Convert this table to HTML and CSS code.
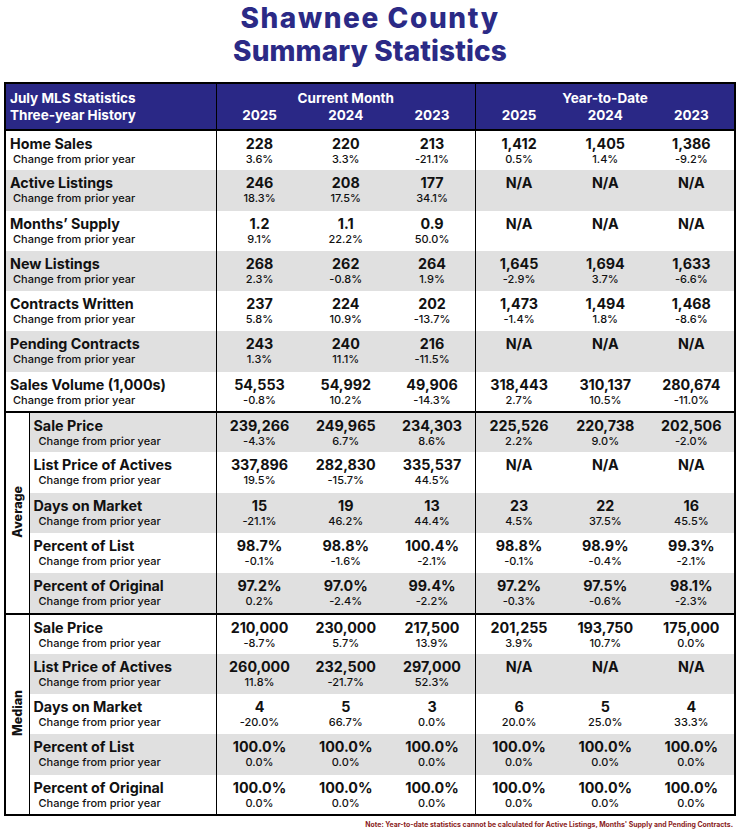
FILE: index.html
```html
<!DOCTYPE html>
<html lang="en">
<head>
<meta charset="utf-8">
<title>Shawnee County Summary Statistics</title>
<link rel="stylesheet" href="styles.css">
</head>
<body>
<header class="title">
  <h1>Shawnee County</h1>
  <h2>Summary Statistics</h2>
</header>
<table class="stats">
  <colgroup>
    <col class="c-side"><col class="c-label">
    <col class="c-num"><col class="c-num"><col class="c-num">
    <col class="c-num"><col class="c-num"><col class="c-num">
  </colgroup>
  <thead>
    <tr class="h1">
      <th colspan="2" rowspan="2" class="h-label"><div>July MLS Statistics</div><div>Three-year History</div></th>
      <th colspan="3" class="h-group div">Current Month</th>
      <th colspan="3" class="h-group div">Year-to-Date</th>
    </tr>
    <tr class="h2">
      <th class="div">2025</th><th>2024</th><th>2023</th>
      <th class="div">2025</th><th>2024</th><th>2023</th>
    </tr>
  </thead>
  <tbody class="sec">
    <tr>
      <td colspan="2" class="lbl"><b>Home Sales</b><span>Change from prior year</span></td>
      <td class="div"><b>228</b><span>3.6%</span></td><td><b>220</b><span>3.3%</span></td><td><b>213</b><span>-21.1%</span></td>
      <td class="div"><b>1,412</b><span>0.5%</span></td><td><b>1,405</b><span>1.4%</span></td><td><b>1,386</b><span>-9.2%</span></td>
    </tr>
    <tr class="g">
      <td colspan="2" class="lbl"><b>Active Listings</b><span>Change from prior year</span></td>
      <td class="div"><b>246</b><span>18.3%</span></td><td><b>208</b><span>17.5%</span></td><td><b>177</b><span>34.1%</span></td>
      <td class="div"><b>N/A</b><span>&nbsp;</span></td><td><b>N/A</b><span>&nbsp;</span></td><td><b>N/A</b><span>&nbsp;</span></td>
    </tr>
    <tr>
      <td colspan="2" class="lbl"><b>Months’ Supply</b><span>Change from prior year</span></td>
      <td class="div"><b>1.2</b><span>9.1%</span></td><td><b>1.1</b><span>22.2%</span></td><td><b>0.9</b><span>50.0%</span></td>
      <td class="div"><b>N/A</b><span>&nbsp;</span></td><td><b>N/A</b><span>&nbsp;</span></td><td><b>N/A</b><span>&nbsp;</span></td>
    </tr>
    <tr class="g">
      <td colspan="2" class="lbl"><b>New Listings</b><span>Change from prior year</span></td>
      <td class="div"><b>268</b><span>2.3%</span></td><td><b>262</b><span>-0.8%</span></td><td><b>264</b><span>1.9%</span></td>
      <td class="div"><b>1,645</b><span>-2.9%</span></td><td><b>1,694</b><span>3.7%</span></td><td><b>1,633</b><span>-6.6%</span></td>
    </tr>
    <tr>
      <td colspan="2" class="lbl"><b>Contracts Written</b><span>Change from prior year</span></td>
      <td class="div"><b>237</b><span>5.8%</span></td><td><b>224</b><span>10.9%</span></td><td><b>202</b><span>-13.7%</span></td>
      <td class="div"><b>1,473</b><span>-1.4%</span></td><td><b>1,494</b><span>1.8%</span></td><td><b>1,468</b><span>-8.6%</span></td>
    </tr>
    <tr class="g">
      <td colspan="2" class="lbl"><b>Pending Contracts</b><span>Change from prior year</span></td>
      <td class="div"><b>243</b><span>1.3%</span></td><td><b>240</b><span>11.1%</span></td><td><b>216</b><span>-11.5%</span></td>
      <td class="div"><b>N/A</b><span>&nbsp;</span></td><td><b>N/A</b><span>&nbsp;</span></td><td><b>N/A</b><span>&nbsp;</span></td>
    </tr>
    <tr>
      <td colspan="2" class="lbl"><b>Sales Volume (1,000s)</b><span>Change from prior year</span></td>
      <td class="div"><b>54,553</b><span>-0.8%</span></td><td><b>54,992</b><span>10.2%</span></td><td><b>49,906</b><span>-14.3%</span></td>
      <td class="div"><b>318,443</b><span>2.7%</span></td><td><b>310,137</b><span>10.5%</span></td><td><b>280,674</b><span>-11.0%</span></td>
    </tr>
  </tbody>
  <tbody class="sec">
    <tr class="g">
      <th rowspan="5" class="side"><span>Average</span></th>
      <td class="lbl in"><b>Sale Price</b><span>Change from prior year</span></td>
      <td class="div"><b>239,266</b><span>-4.3%</span></td><td><b>249,965</b><span>6.7%</span></td><td><b>234,303</b><span>8.6%</span></td>
      <td class="div"><b>225,526</b><span>2.2%</span></td><td><b>220,738</b><span>9.0%</span></td><td><b>202,506</b><span>-2.0%</span></td>
    </tr>
    <tr>
      <td class="lbl in"><b>List Price of Actives</b><span>Change from prior year</span></td>
      <td class="div"><b>337,896</b><span>19.5%</span></td><td><b>282,830</b><span>-15.7%</span></td><td><b>335,537</b><span>44.5%</span></td>
      <td class="div"><b>N/A</b><span>&nbsp;</span></td><td><b>N/A</b><span>&nbsp;</span></td><td><b>N/A</b><span>&nbsp;</span></td>
    </tr>
    <tr class="g">
      <td class="lbl in"><b>Days on Market</b><span>Change from prior year</span></td>
      <td class="div"><b>15</b><span>-21.1%</span></td><td><b>19</b><span>46.2%</span></td><td><b>13</b><span>44.4%</span></td>
      <td class="div"><b>23</b><span>4.5%</span></td><td><b>22</b><span>37.5%</span></td><td><b>16</b><span>45.5%</span></td>
    </tr>
    <tr>
      <td class="lbl in"><b>Percent of List</b><span>Change from prior year</span></td>
      <td class="div"><b>98.7%</b><span>-0.1%</span></td><td><b>98.8%</b><span>-1.6%</span></td><td><b>100.4%</b><span>-2.1%</span></td>
      <td class="div"><b>98.8%</b><span>-0.1%</span></td><td><b>98.9%</b><span>-0.4%</span></td><td><b>99.3%</b><span>-2.1%</span></td>
    </tr>
    <tr class="g">
      <td class="lbl in"><b>Percent of Original</b><span>Change from prior year</span></td>
      <td class="div"><b>97.2%</b><span>0.2%</span></td><td><b>97.0%</b><span>-2.4%</span></td><td><b>99.4%</b><span>-2.2%</span></td>
      <td class="div"><b>97.2%</b><span>-0.3%</span></td><td><b>97.5%</b><span>-0.6%</span></td><td><b>98.1%</b><span>-2.3%</span></td>
    </tr>
  </tbody>
  <tbody class="sec">
    <tr>
      <th rowspan="5" class="side"><span>Median</span></th>
      <td class="lbl in"><b>Sale Price</b><span>Change from prior year</span></td>
      <td class="div"><b>210,000</b><span>-8.7%</span></td><td><b>230,000</b><span>5.7%</span></td><td><b>217,500</b><span>13.9%</span></td>
      <td class="div"><b>201,255</b><span>3.9%</span></td><td><b>193,750</b><span>10.7%</span></td><td><b>175,000</b><span>0.0%</span></td>
    </tr>
    <tr class="g">
      <td class="lbl in"><b>List Price of Actives</b><span>Change from prior year</span></td>
      <td class="div"><b>260,000</b><span>11.8%</span></td><td><b>232,500</b><span>-21.7%</span></td><td><b>297,000</b><span>52.3%</span></td>
      <td class="div"><b>N/A</b><span>&nbsp;</span></td><td><b>N/A</b><span>&nbsp;</span></td><td><b>N/A</b><span>&nbsp;</span></td>
    </tr>
    <tr>
      <td class="lbl in"><b>Days on Market</b><span>Change from prior year</span></td>
      <td class="div"><b>4</b><span>-20.0%</span></td><td><b>5</b><span>66.7%</span></td><td><b>3</b><span>0.0%</span></td>
      <td class="div"><b>6</b><span>20.0%</span></td><td><b>5</b><span>25.0%</span></td><td><b>4</b><span>33.3%</span></td>
    </tr>
    <tr class="g">
      <td class="lbl in"><b>Percent of List</b><span>Change from prior year</span></td>
      <td class="div"><b>100.0%</b><span>0.0%</span></td><td><b>100.0%</b><span>0.0%</span></td><td><b>100.0%</b><span>0.0%</span></td>
      <td class="div"><b>100.0%</b><span>0.0%</span></td><td><b>100.0%</b><span>0.0%</span></td><td><b>100.0%</b><span>0.0%</span></td>
    </tr>
    <tr>
      <td class="lbl in"><b>Percent of Original</b><span>Change from prior year</span></td>
      <td class="div"><b>100.0%</b><span>0.0%</span></td><td><b>100.0%</b><span>0.0%</span></td><td><b>100.0%</b><span>0.0%</span></td>
      <td class="div"><b>100.0%</b><span>0.0%</span></td><td><b>100.0%</b><span>0.0%</span></td><td><b>100.0%</b><span>0.0%</span></td>
    </tr>
  </tbody>
</table>
<p class="note">Note: Year-to-date statistics cannot be calculated for Active Listings, Months' Supply and Pending Contracts.</p>
</body>
</html>
```
FILE: styles.css
```css
* { box-sizing: border-box; }
html, body { margin: 0; padding: 0; background: #fff; }
body {
  font-family: Inter, "DejaVu Sans", sans-serif;
  color: #111;
  width: 740px;
}
.title {
  text-align: center;
  color: #2b2a86;
  padding-top: 2px;
}
.title h1, .title h2 {
  margin: 0;
  font-size: 28px;
  font-weight: 800;
  line-height: 33px;
}
.title h1 { letter-spacing: 1.6px; }
.title h2 { letter-spacing: 0.1px; }
.stats {
  border-collapse: collapse;
  margin: 14px 0 0 4px;
  width: 730px;
  table-layout: fixed;
  border: 2px solid #000;
}
.c-side { width: 24px; }
.c-label { width: 187px; }
.c-num { width: 86.5px; }

thead th {
  background: #2a2886;
  color: #fff;
  font-weight: 700;
  font-size: 13.5px;
  line-height: 17px;
  padding: 0;
  text-align: center;
}
.h1 th { height: 24px; vertical-align: bottom; }
.h2 th { height: 23px; vertical-align: top; }
.h-label { text-align: left !important; vertical-align: middle !important; padding-left: 4px !important; }
thead { border-bottom: 2px solid #000; }

.div { border-left: 1.5px solid #000; }
.sec { border-top: 2px solid #000; }

tbody td {
  height: 40.3px;
  padding: 0;
  text-align: center;
  vertical-align: top;
}
tbody td b {
  display: block;
  font-weight: 700;
  font-size: 14.3px;
  line-height: 16px;
  padding-top: 5px;
}
tbody td span {
  display: block;
  font-size: 11px;
  line-height: 14px;
  font-weight: 500;
}
tr.g td { background: #e0e0e0; }
td.lbl { text-align: left; padding-left: 4px; }
td.lbl span { padding-left: 3px; }
td.lbl.in { padding-left: 4px; border-left: 1.5px solid #000; }
td.lbl.in span { padding-left: 5px; }

.side {
  background: #fff;
  padding: 0;
  font-size: 12.5px;
  font-weight: 800;
  vertical-align: middle;
  text-align: center;
}
.side span {
  display: inline-block;
  writing-mode: vertical-rl;
  transform: rotate(180deg);
}
.note {
  margin: 4px 7px 0 0;
  text-align: right;
  font-size: 6.9px;
  font-weight: 700;
  color: #8a1c1c;
}
```
